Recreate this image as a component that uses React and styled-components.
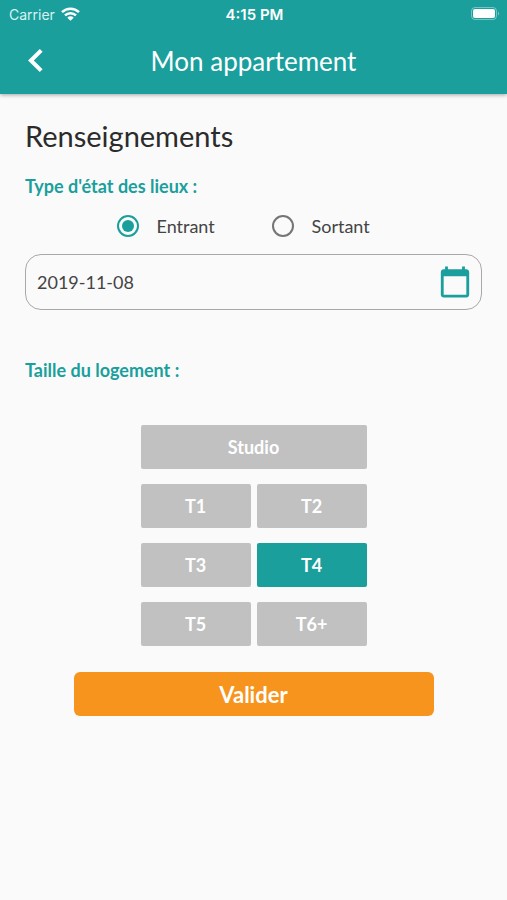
import React from 'react';
import styled, { createGlobalStyle } from 'styled-components';

const teal = '#1a9f9d';
const grey = '#c1c1c1';

const GlobalStyle = createGlobalStyle`
  * {
    box-sizing: border-box;
  }

  body {
    margin: 0;
    background: #fafafa;
    color: #2b2b2b;
    font-family: Lato, 'Open Sans', sans-serif;
  }

  button, input {
    font-family: inherit;
  }
`;

const Header = styled.header`
  background: ${teal};
  color: #fff;
  box-shadow: 0 1px 4px rgba(0, 0, 0, 0.35);
`;

const StatusBar = styled.div`
  display: grid;
  grid-template-columns: 1fr auto 1fr;
  align-items: center;
  height: 28px;
  padding: 0 7px 0 9px;
  font-family: Inter, sans-serif;
  font-size: 14px;
`;

const Carrier = styled.span`
  display: flex;
  align-items: center;
  gap: 6px;
  color: #d9f2f1;
`;

const Clock = styled.span`
  font-size: 15px;
  font-weight: 600;
`;

const Battery = styled.svg`
  justify-self: end;
`;

const TitleBar = styled.div`
  display: grid;
  grid-template-columns: 48px 1fr 48px;
  align-items: center;
  height: 66px;
  padding: 0 12px;
`;

const BackButton = styled.button`
  display: flex;
  align-items: center;
  justify-content: center;
  height: 48px;
  padding: 0;
  border: 0;
  background: none;
  color: inherit;
  cursor: pointer;
`;

const Title = styled.h1`
  margin: 0;
  font-size: 26px;
  font-weight: 400;
  line-height: 32px;
  text-align: center;
`;

const Form = styled.form`
  display: flex;
  flex-direction: column;
  padding: 24px 25px;
`;

const Heading = styled.h2`
  margin: 0 0 20px;
  font-size: 29px;
  font-weight: 400;
  line-height: 36px;
`;

const Group = styled.fieldset`
  min-width: 0;
  margin: 0;
  padding: 0;
  border: 0;
`;

const Legend = styled.legend`
  padding: 0;
  color: ${teal};
  font-size: 18px;
  font-weight: 700;
  line-height: 24px;
`;

const RadioRow = styled.div`
  display: grid;
  grid-template-columns: 1fr 1fr;
  max-width: 310px;
  margin: 16px auto;
`;

const RadioLabel = styled.label`
  display: flex;
  align-items: center;
  gap: 18px;
  padding-left: 18px;
  color: #444;
  font-size: 18px;
  line-height: 24px;
  cursor: pointer;
`;

const Radio = styled.input`
  display: grid;
  place-items: center;
  appearance: none;
  width: 22px;
  height: 22px;
  margin: 0;
  border: 2px solid #757575;
  border-radius: 50%;

  &:checked {
    border-color: ${teal};
  }

  &:checked::before {
    content: '';
    width: 12px;
    height: 12px;
    border-radius: 50%;
    background: ${teal};
  }
`;

const DateField = styled.div`
  display: flex;
  align-items: center;
  height: 56px;
  margin-bottom: 48px;
  padding: 0 9px 0 11px;
  border: 1px solid #a8a8a8;
  border-radius: 16px;
`;

const DateInput = styled.input`
  flex: 1;
  min-width: 0;
  padding: 0;
  border: 0;
  outline: 0;
  background: none;
  color: #444;
  font-size: 18px;
  line-height: 24px;
`;

const CalendarButton = styled.button`
  display: flex;
  padding: 0;
  border: 0;
  background: none;
  color: ${teal};
  cursor: pointer;
`;

const SizeGrid = styled.div`
  display: grid;
  grid-template-columns: 1fr 1fr;
  gap: 15px 6px;
  max-width: 226px;
  margin: 43px auto 26px;
`;

const SizeButton = styled.button`
  grid-column: ${props => props.$wide ? '1 / -1' : 'auto'};
  height: 44px;
  padding: 0;
  border: 0;
  border-radius: 2px;
  background: ${props => props.$selected ? teal : grey};
  color: #fff;
  font-size: 18px;
  font-weight: 700;
  cursor: pointer;
`;

const SubmitButton = styled.button`
  align-self: center;
  width: 100%;
  max-width: 360px;
  height: 44px;
  padding: 0;
  border: 0;
  border-radius: 6px;
  background: #f7941d;
  color: #fff;
  font-size: 22px;
  font-weight: 700;
  cursor: pointer;
`;

const WifiIcon = () => (
  <svg width="19" height="14" viewBox="0 0 19 14" fill="none" stroke="#fff" strokeWidth="2.5" aria-hidden="true">
    <path d="M1 5.1a12.2 12.2 0 0 1 17 0" />
    <path d="M4 8.4a7.8 7.8 0 0 1 11 0" />
    <path d="M9.5 13.8 6.3 10.7a4.5 4.5 0 0 1 6.4 0z" fill="#fff" stroke="none" />
  </svg>
);

const BatteryIcon = () => (
  <Battery width="29" height="14" viewBox="0 0 29 14" aria-hidden="true">
    <rect x="0.5" y="0.5" width="25" height="12" rx="3.5" fill="none" stroke="#fff" strokeOpacity="0.4" />
    <rect x="2" y="2" width="22" height="9" rx="2" fill="#fff" />
    <path d="M27 4.8v3.6c1.6-.6 1.6-3 0-3.6z" fill="#fff" fillOpacity="0.4" />
  </Battery>
);

const BackIcon = () => (
  <svg width="16" height="26" viewBox="0 0 16 26" fill="none" stroke="#fff" strokeWidth="4" aria-hidden="true">
    <path d="M13.2 2.4 2.9 12.5l10.3 10.1" />
  </svg>
);

const CalendarIcon = () => (
  <svg width="34" height="34" viewBox="0 0 24 24" fill="currentColor" aria-hidden="true">
    <path d="M20 3h-1V1h-2v2H7V1H5v2H4c-1.1 0-2 .9-2 2v16c0 1.1.9 2 2 2h16c1.1 0 2-.9 2-2V5c0-1.1-.9-2-2-2zm0 18H4V8h16v13z" />
  </svg>
);

const types = ['Entrant', 'Sortant'];
const sizes = ['Studio', 'T1', 'T2', 'T3', 'T4', 'T5', 'T6+'];

class App extends React.Component {

  state = {
    type: 'Entrant',
    date: '2019-11-08',
    size: 'T4'
  }

  dateInput = React.createRef();

  handleChange = (e) => {
    this.setState({ [e.target.name]: e.target.value });
  }

  handleSubmit = (e) => {
    e.preventDefault();
  }

  render() {
    const { type, date, size } = this.state;

    return (
      <>
        <GlobalStyle />
        <Header>
          <StatusBar>
            <Carrier>Carrier <WifiIcon /></Carrier>
            <Clock>4:15 PM</Clock>
            <BatteryIcon />
          </StatusBar>
          <TitleBar>
            <BackButton type="button" aria-label="Retour"><BackIcon /></BackButton>
            <Title>Mon appartement</Title>
          </TitleBar>
        </Header>

        <Form onSubmit={this.handleSubmit}>
          <Heading>Renseignements</Heading>

          <Group>
            <Legend>Type d'état des lieux :</Legend>
            <RadioRow>
              {types.map(item => (
                <RadioLabel key={item}>
                  <Radio
                    type="radio"
                    name="type"
                    value={item}
                    checked={type === item}
                    onChange={this.handleChange}
                  />
                  {item}
                </RadioLabel>
              ))}
            </RadioRow>
          </Group>

          <DateField>
            <DateInput
              ref={this.dateInput}
              type="text"
              name="date"
              aria-label="Date"
              value={date}
              onChange={this.handleChange}
            />
            <CalendarButton
              type="button"
              aria-label="Choisir une date"
              onClick={() => this.dateInput.current.focus()}
            >
              <CalendarIcon />
            </CalendarButton>
          </DateField>

          <Group>
            <Legend>Taille du logement :</Legend>
            <SizeGrid>
              {sizes.map(item => (
                <SizeButton
                  key={item}
                  type="button"
                  aria-pressed={size === item}
                  $wide={item === 'Studio'}
                  $selected={size === item}
                  onClick={() => this.setState({ size: item })}
                >
                  {item}
                </SizeButton>
              ))}
            </SizeGrid>
          </Group>

          <SubmitButton type="submit">Valider</SubmitButton>
        </Form>
      </>
    );
  }
}

export default App;
